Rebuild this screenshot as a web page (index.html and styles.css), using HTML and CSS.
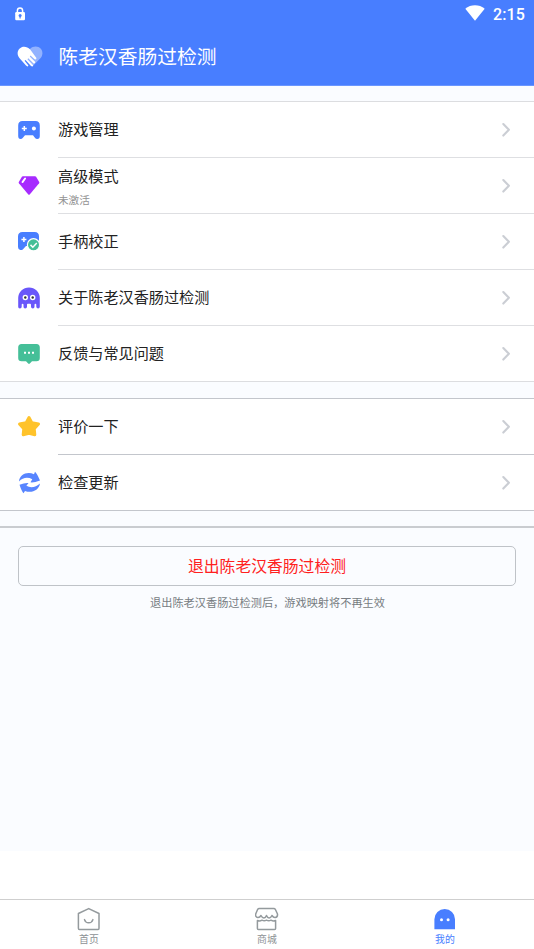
FILE: index.html
```html
<!DOCTYPE html>
<html lang="zh-CN">
<head>
<meta charset="utf-8">
<title>陈老汉香肠过检测</title>
<link rel="stylesheet" href="styles.css">
</head>
<body>
<svg class="defs" aria-hidden="true">
  <symbol id="chevron" viewBox="0 0 10 15"><path d="M2.300 2 7.900 7.800 2.300 13.600" fill="none" stroke="#cbced4" stroke-width="2.100" stroke-linecap="round" stroke-linejoin="round"/></symbol>
</svg>
<div class="app">
  <header class="header">
    <div class="status">
      <svg class="lock" viewBox="0 0 12 14"><path d="M3.400 6V3.500a2.600 2.600 0 0 1 5.200 0V6" fill="none" stroke="#fff" stroke-width="1.500"/><rect x="1.200" y="5" width="9.800" height="8.200" rx="1.200" fill="#fff"/><circle cx="6.100" cy="8.400" r="1.500" fill="#487eff"/><path d="M6.100 8.800v2.600" stroke="#487eff" stroke-width="1.200"/></svg>
      <div class="status-right">
        <svg class="wifi" viewBox="0 0 20 16"><path d="M.3 3.800C5.800-.8 14.200-.8 19.700 3.800L10 15.800Z" fill="#fff"/></svg>
        <span class="clock">2:15</span>
      </div>
    </div>
    <div class="titlebar">
      <svg class="logo" viewBox="0 0 26 22"><path d="M13 3C16 0 21-.3 23.800 2.800 26.200 5.600 25.800 9.600 23.400 12.200L15.500 20.300 8 12Z" fill="#92b2ff"/><path d="M13 3.200C10 .1 5.300-.3 2.400 2.700-.3 5.700.3 9.700 2.800 12.400L9 19.600Q10.700 21.200 11.400 19.500L7.600 14.800 8.500 13.900 14 20.100Q15.800 21.200 16.200 19.300L10.400 13.200 11.300 12.200 16.300 17.300Q18.200 18 18.300 16L12.800 10.400 13.500 9.400 17.600 13.300Q19.500 13.800 19.400 12Z" fill="#fff"/></svg>
      <h1 class="title">陈老汉香肠过检测</h1>
    </div>
  </header>

  <main class="content">
    <section class="group">
      <div class="row">
        <svg class="icon" viewBox="0 0 24 25"><path d="M5.500 4h13Q22.800 4 22.800 8.500V19q0 3-2.500 3-1.500 0-2.600-1.500L16 18.200H8l-1.900 2.300Q5 22 3.500 22 1.200 22 1.200 19V8.500Q1.200 4 5.500 4Z" fill="#487eff"/><path d="M7.300 9v5M4.800 11.500h5" stroke="#fff" stroke-width="1.500"/><circle cx="16.900" cy="11.500" r="2" fill="#fff"/></svg>
        <div class="cell"><div class="label">游戏管理</div><svg class="chev"><use href="#chevron"/></svg></div>
      </div>
      <div class="row">
        <svg class="icon" viewBox="0 0 24 25"><path d="M5.900 3.200h12.200q.6 0 1 .5L22.200 9q.4.7-.1 1.300L12.700 21.500q-.7.700-1.400 0L1.900 10.300Q1.400 9.700 1.800 9L4.900 3.700q.4-.5 1-.5Z" fill="#a72bff"/><path d="M8.100 5.500 5.500 9.100" stroke="#fff" stroke-width="1.900" stroke-linecap="round"/></svg>
        <div class="cell"><div class="label two">高级模式<small class="sub">未激活</small></div><svg class="chev"><use href="#chevron"/></svg></div>
      </div>
      <div class="row">
        <svg class="icon" viewBox="0 0 24 25"><path d="M5.500 3h12.200Q22 3 22 7.500V17H9L6 20.200Q4.800 21.400 3.300 21 1 20.500 1 18V7.500Q1 3 5.500 3Z" fill="#487eff"/><path d="M6.900 8v5M4.400 10.500h5" stroke="#fff" stroke-width="1.500"/><circle cx="16.500" cy="15.800" r="6.100" fill="#45bf98" stroke="#fff" stroke-width="1.200"/><path d="m13.500 15.900 2.300 2.300 4-4.200" fill="none" stroke="#fff" stroke-width="1.500"/></svg>
        <div class="cell"><div class="label">手柄校正</div><svg class="chev"><use href="#chevron"/></svg></div>
      </div>
      <div class="row">
        <svg class="icon" viewBox="0 0 24 25"><path d="M1.200 13a10.800 10.600 0 0 1 21.600 0v8.700q0 1.800-1.700 1.800T19.300 21.700v-2q0-.9-.9-.9t-.9.9v2q0 1.800-1.700 1.800T14 21.700v-2q0-.9-.9-.9h-2.200q-.9 0-.9.9v2q0 1.800-1.800 1.800T6.500 21.700v-2q0-.9-.9-.9t-.9.900v2q0 1.800-1.800 1.800T1.200 21.700Z" fill="#6956fa"/><circle cx="8.300" cy="12.500" r="2.700" fill="#fff"/><circle cx="15.700" cy="12.500" r="2.700" fill="#fff"/><circle cx="8.300" cy="12.500" r="1.200" fill="#333"/><circle cx="15.700" cy="12.500" r="1.200" fill="#333"/></svg>
        <div class="cell"><div class="label">关于陈老汉香肠过检测</div><svg class="chev"><use href="#chevron"/></svg></div>
      </div>
      <div class="row last">
        <svg class="icon" viewBox="0 0 24 25"><path d="M4.500 3h15Q22.800 3 22.800 6.500v10.500Q22.800 20.200 19.500 20.200H15l-2.200 2.400q-.8.800-1.600 0L9 20.200H4.500Q1.200 20.200 1.200 17V6.500Q1.200 3 4.500 3Z" fill="#45bf98"/><path d="M7 10.800h2v2H7zM11 10.800h2v2h-2zM15 10.800h2v2h-2z" fill="#fff"/></svg>
        <div class="cell"><div class="label">反馈与常见问题</div><svg class="chev"><use href="#chevron"/></svg></div>
      </div>
    </section>

    <section class="group dark">
      <div class="row">
        <svg class="icon" viewBox="0 0 24 25"><path d="M12 3.500 14.800 8.600 21.500 10 17.200 14.700 17.800 20.700 12 19.300 6.200 20.700 6.800 14.700 2.500 10 9.200 8.600Z" fill="#ffc32b" stroke="#ffc32b" stroke-width="3" stroke-linejoin="round"/></svg>
        <div class="cell"><div class="label">评价一下</div><svg class="chev"><use href="#chevron"/></svg></div>
      </div>
      <div class="row last">
        <svg class="icon" viewBox="0 0 24 25"><path d="M2 11.500C2.500 4.500 10 1.200 17 4.200L18 1.700Q20 3.400 23 10.500 17 12.800 13.500 12.300L15.300 9.200C10.500 6.800 5.600 7.700 2 11.500Z" fill="#5885ff"/><path d="M23 13.500C21.800 20.700 14.500 23.300 8 20.900L6.500 23.300Q4.700 21.500 2.500 14.800 8 12.500 11.500 13L9.400 15.800C13.700 18.300 19 17.200 23 13.500Z" fill="#5885ff"/></svg>
        <div class="cell"><div class="label">检查更新</div><svg class="chev"><use href="#chevron"/></svg></div>
      </div>
    </section>

    <section class="exit">
      <button class="exit-btn" type="button">退出陈老汉香肠过检测</button>
      <p class="hint">退出陈老汉香肠过检测后，游戏映射将不再生效</p>
    </section>
  </main>

  <nav class="tabs">
    <a class="tab">
      <svg class="tab-icon" viewBox="0 0 24 24"><path d="M11.700 1.600 22 6.500V21.300Q22 22.400 21.100 22.400H2.300Q1.400 22.400 1.400 21.300V6.500Z" fill="none" stroke="#949a9d" stroke-width="1.500" stroke-linejoin="round"/><path d="M7.500 12.600q1 3.200 4.200 3.200t4.200-3.200" fill="none" stroke="#949a9d" stroke-width="1.500" stroke-linecap="round"/></svg>
      <span>首页</span>
    </a>
    <a class="tab">
      <svg class="tab-icon" viewBox="0 0 24 24"><path d="M4.300 1.500h14.400q1.200 0 1.700 1L22.500 7q.3 3.200-2.200 3.500-2 .2-3.300-2-1.200 2.500-2.900 2.500-1.600 0-2.600-2.500-1 2.500-2.600 2.500-1.700 0-2.900-2.500-1.300 2.200-3.300 2Q.2 10.200.7 7l1.900-4.500q.5-1 1.700-1Z" fill="none" stroke="#949a9d" stroke-width="1.500" stroke-linejoin="round"/><path d="M2.400 13.500V21.400q0 1 1 1h16.200q1 0 1-1V13.500q-2.300 1-4.600-.3-2.200 1.200-4.500 0-2.300 1.200-4.500 0-2.300 1.300-4.600.3Z" fill="none" stroke="#949a9d" stroke-width="1.500" stroke-linejoin="round"/></svg>
      <span>商城</span>
    </a>
    <a class="tab active">
      <svg class="tab-icon" viewBox="0 0 24 24"><path d="M1.400 12.200a10.300 10.200 0 0 1 20.600 0V22.200H1.400Z" fill="#487eff"/><circle cx="8.500" cy="12.700" r="1.500" fill="#fff"/><circle cx="15.100" cy="12.700" r="1.500" fill="#fff"/></svg>
      <span>我的</span>
    </a>
  </nav>
</div>
</body>
</html>
```
FILE: styles.css
```css
* { box-sizing: border-box; }
body {
  margin: 0;
  background: #fff;
  font-family: "Noto Sans CJK SC", sans-serif;
  color: #222;
}
.defs { display: none; }
.app {
  width: 534px;
  height: 949px;
  display: flex;
  flex-direction: column;
  overflow: hidden;
}
.header {
  height: 86px;
  flex: none;
  background: #487eff;
  border-bottom: 1px solid #6a96ff;
  color: #fff;
}
.status {
  height: 28px;
  padding: 0 9px 0 14px;
  display: flex;
  justify-content: space-between;
  align-items: center;
}
.lock { width: 12px; height: 14px; }
.status-right { display: flex; align-items: center; gap: 8px; }
.wifi { width: 20px; height: 16px; margin-bottom: 2px; }
.clock {
  font: 500 16px/28px Roboto, sans-serif;
  letter-spacing: 0.1px;
  padding-top: 1px;
}
.titlebar {
  height: 57px;
  padding-left: 17px;
  display: flex;
  align-items: center;
}
.logo { width: 26px; height: 22px; margin-right: 15.5px; }
.title {
  margin: 0;
  padding-bottom: 2px;
  font-size: 19.75px;
  line-height: 28px;
  font-weight: 400;
}
.content {
  height: 765px;
  flex: none;
  padding-top: 15px;
  background: #fafcff;
}
.group {
  background: #fff;
  border-top: 1px solid #dcdde0;
  border-bottom: 1px solid #dcdde0;
  margin-bottom: 16px;
}
.group.dark { border-color: #c3c6cc; }
.row {
  height: 56px;
  padding-left: 17px;
  display: flex;
}
.row.last { height: 55px; }
.icon {
  width: 24px;
  height: 25px;
  flex: none;
  margin: 15px 17px 0 0;
}
.cell {
  flex: 1;
  display: flex;
  align-items: center;
  justify-content: space-between;
  border-bottom: 1px solid #dedfe2;
  padding-right: 23px;
}
.dark .cell { border-color: #c3c6cc; }
.row.last .cell { border-bottom: 0; }
.label { font-size: 15.15px; line-height: 22px; padding-bottom: 3px; }
.sub {
  display: block;
  margin-top: 6px;
  font-size: 10.6px;
  line-height: 16px;
  color: #929292;
}
.label.two { padding-bottom: 0; }
.chev { width: 10px; height: 15px; }
.exit {
  border-top: 2px solid #c9ccd0;
  padding: 18px 18px 0;
  margin-top: -1px;
}
.exit-btn {
  display: block;
  width: 100%;
  height: 40px;
  padding: 0;
  border: 1px solid #bfc3c8;
  border-width: 1.5px;
  border-radius: 5px;
  background: transparent;
  color: #ff2020;
  font: 400 15.8px/38px "Noto Sans CJK SC", sans-serif;
}
.hint {
  margin: 7px 0 0 1px;
  text-align: center;
  font-size: 11.2px;
  line-height: 18px;
  color: #777c82;
}
.tabs {
  height: 50px;
  margin-top: 48px;
  border-top: 1px solid #cfcfcf;
  display: grid;
  grid-template-columns: repeat(3, 1fr);
}
.tab {
  display: flex;
  flex-direction: column;
  align-items: center;
  padding-top: 7px;
  color: #8d9195;
  font-size: 9.9px;
  line-height: 16px;
}
.tab-icon { width: 24px; height: 24px; }
.tab.active { color: #487eff; }
```
